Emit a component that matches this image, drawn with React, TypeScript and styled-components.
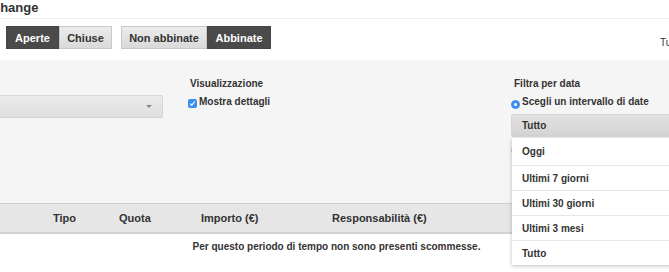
import React from 'react';
import styled, { createGlobalStyle } from 'styled-components';

const GlobalStyle = createGlobalStyle`
  * { box-sizing: border-box; }
  body {
    margin: 0;
    background: #fff;
    font-family: 'Liberation Sans', Arial, sans-serif;
    color: #333;
    overflow: hidden;
  }
`;

const Page = styled.div`
  width: 669px;
  height: 272px;
  overflow: hidden;
  position: relative;
`;

const Header = styled.header`
  height: 19px;
  border-bottom: 1px solid #efefef;
`;

const Title = styled.h2`
  margin: 0 0 0 -23px;
  font-size: 13px;
  line-height: 15px;
  font-weight: bold;
  color: #333;
`;

const Toolbar = styled.div`
  height: 41px;
  display: flex;
  align-items: flex-start;
  padding: 7px 0 0 6px;
  gap: 9px;
`;

const Group = styled.div`
  display: flex;
`;

const ToggleButton = styled.button<{ $active?: boolean; $w: number }>`
  width: ${(p) => p.$w}px;
  height: 23px;
  padding: 0;
  white-space: nowrap;
  border: 1px solid ${(p) => (p.$active ? '#444' : '#c8c8c8')};
  background: ${(p) =>
    p.$active ? '#4a4a4a' : 'linear-gradient(#ececec, #d9d9d9)'};
  color: ${(p) => (p.$active ? '#fff' : '#333')};
  font-family: 'Liberation Sans', Arial, sans-serif;
  font-weight: bold;
  font-size: 11px;
  cursor: pointer;
`;

const Spacer = styled.div`
  flex: 1;
`;

const RightNote = styled.span`
  font-size: 10px;
  margin-top: 11px;
  margin-right: -12px;
  width: 21px;
  overflow: hidden;
  white-space: nowrap;
`;

const Panel = styled.section`
  height: 143px;
  background: #f5f5f5;
  display: grid;
  grid-template-columns: 163px 298px 1fr;
  column-gap: 25px;
  padding-top: 18px;
`;

const Column = styled.div<{ $top?: number }>`
  padding-top: ${(p) => p.$top || 0}px;
  display: flex;
  flex-direction: column;
`;

const Label = styled.div<{ $indent?: number }>`
  font-size: 10px;
  font-weight: bold;
  line-height: 12px;
  margin: 0 0 5px ${(p) => p.$indent || 0}px;
`;

const OptionRow = styled.label`
  display: flex;
  align-items: center;
  gap: 2px;
  font-size: 10px;
  font-weight: bold;
  line-height: 12px;
  height: 13px;
`;

const CheckBox = styled.span`
  width: 9px;
  height: 9px;
  border-radius: 2px;
  background: #3b8ff2;
  display: inline-flex;
  align-items: center;
  justify-content: center;
  margin-top: 4px;
`;

const Radio = styled.span<{ $on?: boolean }>`
  width: 9px;
  height: 9px;
  border-radius: 50%;
  background: ${(p) => (p.$on ? '#3b8ff2' : '#fff')};
  border: 1px solid ${(p) => (p.$on ? '#3b8ff2' : '#bbb')};
  display: inline-flex;
  align-items: center;
  justify-content: center;
  margin-top: 5px;
  &::after {
    content: '';
    width: 3px;
    height: 3px;
    border-radius: 50%;
    background: ${(p) => (p.$on ? '#fff' : 'transparent')};
  }
`;

const SelectBox = styled.div<{ $dark?: boolean }>`
  height: 23px;
  border: 1px solid #d6d6d6;
  border-radius: 2px;
  background: ${(p) =>
    p.$dark ? 'linear-gradient(#e2e2e2, #d3d3d3)' : 'linear-gradient(#ececec, #dedede)'};
  display: flex;
  align-items: center;
  padding: 0 10px;
  font-size: 10px;
  font-weight: bold;
  color: #333;
`;

const LeftSelect = styled(SelectBox)`
  margin-left: -20px;
  justify-content: flex-end;
  padding-right: 10px;
`;

const Caret = styled.span`
  width: 0;
  height: 0;
  border-left: 3px solid transparent;
  border-right: 3px solid transparent;
  border-top: 3px solid #888;
`;

const DateSelect = styled.div`
  position: relative;
  margin-top: 6px;
  width: 170px;
`;

const Menu = styled.ul`
  position: absolute;
  top: calc(100% + 1px);
  left: 1px;
  width: 170px;
  margin: 0;
  padding: 0;
  list-style: none;
  background: #fff;
  box-shadow: 0 1px 4px rgba(0, 0, 0, 0.25);
  z-index: 2;
`;

const MenuItem = styled.li`
  height: 25px;
  display: flex;
  align-items: center;
  padding-left: 10px;
  font-size: 10px;
  font-weight: bold;
  border-top: 1px solid #e6e6e6;
  &:first-child {
    border-top: none;
    height: 27px;
  }
`;

const HiddenRadioRow = styled.div`
  margin-top: 4px;
  display: flex;
`;

const TableHead = styled.div`
  height: 31px;
  background: #e6e6e6;
  border-top: 1px solid #cfcfcf;
  border-bottom: 2px solid #d2d2d2;
  display: grid;
  grid-template-columns: 53px 66px 82px 131px 1fr;
  align-items: center;
`;

const HeadCell = styled.div`
  font-size: 11px;
  font-weight: bold;
  color: #333;
`;

const Empty = styled.div`
  text-align: center;
  font-size: 10px;
  font-weight: bold;
  padding-top: 7px;
  padding-left: 4px;
`;

const dateOptions = ['Oggi', 'Ultimi 7 giorni', 'Ultimi 30 giorni', 'Ultimi 3 mesi', 'Tutto'];

const App = () => {
  return (
    <Page>
      <GlobalStyle />
      <Header>
        <Title>Exchange</Title>
      </Header>
      <Toolbar>
        <Group>
          <ToggleButton $active $w={53}>Aperte</ToggleButton>
          <ToggleButton $w={53}>Chiuse</ToggleButton>
        </Group>
        <Group>
          <ToggleButton $w={86}>Non abbinate</ToggleButton>
          <ToggleButton $active $w={64}>Abbinate</ToggleButton>
        </Group>
        <Spacer />
        <RightNote>Tutto</RightNote>
      </Toolbar>
      <Panel>
        <Column $top={17}>
          <LeftSelect>
            <Caret />
          </LeftSelect>
        </Column>
        <Column>
          <Label $indent={2}>Visualizzazione</Label>
          <OptionRow>
            <CheckBox>
              <svg width="7" height="7" viewBox="0 0 7 7">
                <path d="M1.2 3.8 L2.8 5.3 L5.8 1.5" stroke="#fff" strokeWidth="1.2" fill="none" />
              </svg>
            </CheckBox>
            Mostra dettagli
          </OptionRow>
        </Column>
        <Column>
          <Label $indent={3}>Filtra per data</Label>
          <OptionRow>
            <Radio $on />
            Scegli un intervallo di date
          </OptionRow>
          <DateSelect>
            <SelectBox $dark>Tutto</SelectBox>
            <Menu>
              {dateOptions.map((opt) => (
                <MenuItem key={opt}>{opt}</MenuItem>
              ))}
            </Menu>
          </DateSelect>
          <HiddenRadioRow>
            <Radio />
          </HiddenRadioRow>
        </Column>
      </Panel>
      <TableHead>
        <HeadCell />
        <HeadCell>Tipo</HeadCell>
        <HeadCell>Quota</HeadCell>
        <HeadCell>Importo (€)</HeadCell>
        <HeadCell>Responsabilità (€)</HeadCell>
      </TableHead>
      <Empty>Per questo periodo di tempo non sono presenti scommesse.</Empty>
    </Page>
  );
};

export default App;
